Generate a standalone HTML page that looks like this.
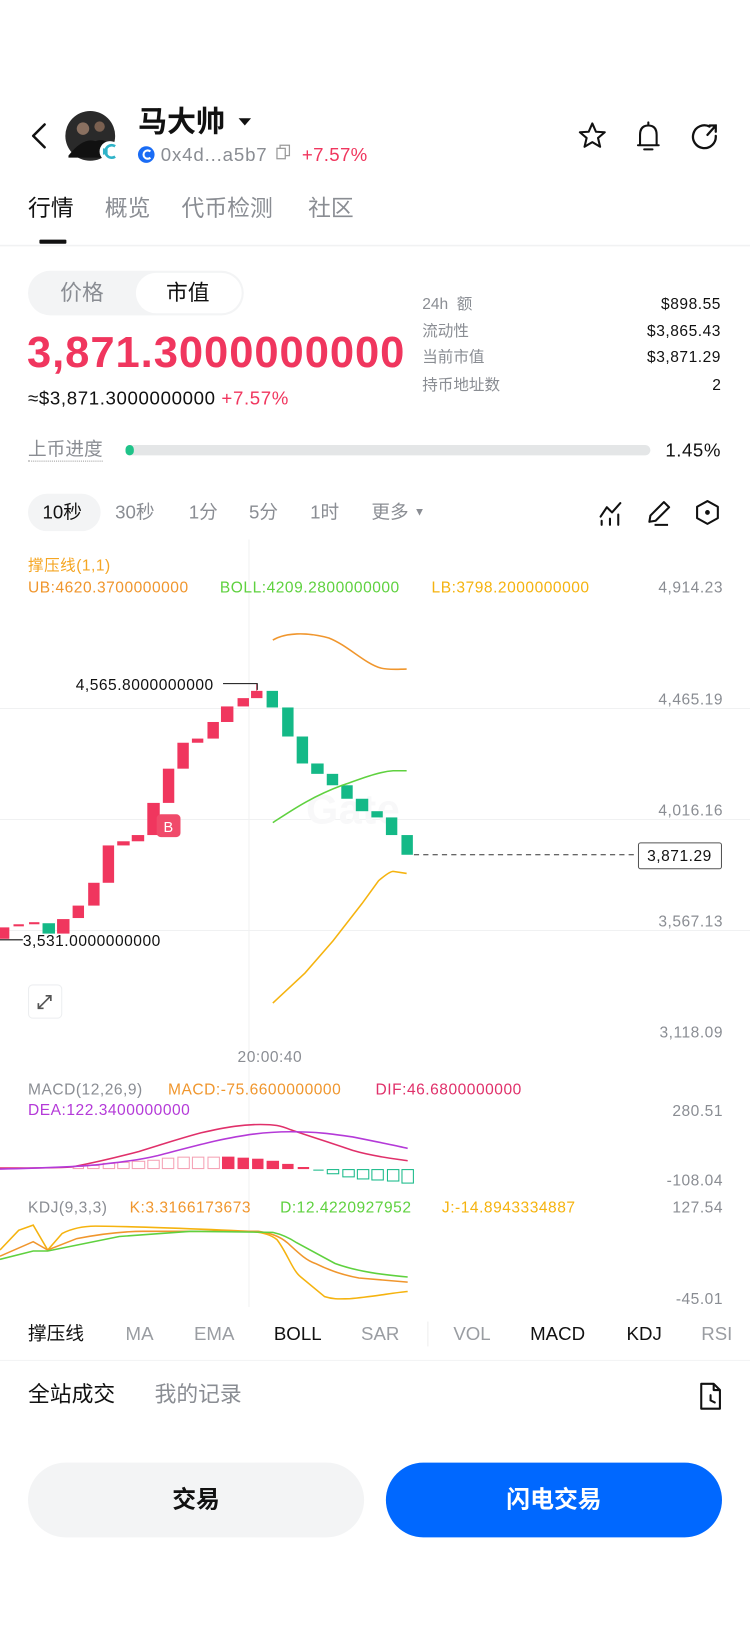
<!DOCTYPE html>
<html><head><meta charset="utf-8">
<style>
*{margin:0;padding:0;box-sizing:border-box}
html,body{width:750px;height:1626px;overflow:hidden;background:#fff}
#w{position:absolute;left:0;top:0;width:723px;height:1568px;transform:scale(1.03734);transform-origin:0 0;font-family:"Liberation Sans","Noto Sans CJK SC",sans-serif;color:#111}
.a{position:absolute;white-space:nowrap;line-height:1}
.g{color:#8a8d93}
.r{color:#f0365e}
svg text{letter-spacing:0.5px}
</style></head><body><div id="w">

<!-- header -->
<svg class="a" style="left:0;top:0" width="723" height="260">
<path d="M43 120 L32 131 L43 142" fill="none" stroke="#111" stroke-width="2.4" stroke-linecap="round" stroke-linejoin="round"/>
<circle cx="87" cy="131" r="24" fill="#2a2a2a"/>
<circle cx="80" cy="124" r="6" fill="#8a7060"/>
<circle cx="96" cy="122" r="5" fill="#7a6050"/>
<path d="M66 150 Q80 132 92 136 Q104 132 110 146 L110 152 L66 152Z" fill="#111"/>
<circle cx="106" cy="146" r="10" fill="#fff"/>
<path d="M111 141 A6 6 0 1 0 111 151" fill="none" stroke="#2fb3c8" stroke-width="2.5"/>
<path d="M103 142 L103 150 M100 143 L100 149" stroke="#2fb3c8" stroke-width="1.5"/>
<path d="M230 114 L242 114 L236 121Z" fill="#111"/>
<circle cx="141" cy="149" r="8" fill="#1a6cf5"/>
<path d="M145 146 A4 4 0 1 0 145 152" fill="none" stroke="#fff" stroke-width="2"/>
<rect x="267" y="143" width="8" height="10" fill="none" stroke="#999" stroke-width="1.2"/>
<path d="M270 143 L270 140 L279 140 L279 150 L275 150" fill="none" stroke="#999" stroke-width="1.2"/>
<path d="M571 119 L574.5 127 L583 127.5 L576.5 133 L578.5 141.5 L571 137 L563.5 141.5 L565.5 133 L559 127.5 L567.5 127Z" fill="none" stroke="#111" stroke-width="2" stroke-linejoin="round"/>
<path d="M615 140 L635 140 M617 140 L617 130 Q617 121 625 121 Q633 121 633 130 L633 140 M625 118 L625 121 M621 144 L629 144" fill="none" stroke="#111" stroke-width="2" stroke-linecap="round"/>
<path d="M684 122 A11 11 0 1 0 690 131" fill="none" stroke="#111" stroke-width="2.2" stroke-linecap="round"/>
<path d="M682 130 L690 121 M684 121 L690 121 L690 127" fill="none" stroke="#111" stroke-width="2.2" stroke-linecap="round"/>
<rect x="38" y="231" width="26" height="4" rx="1" fill="#111"/>
<rect x="0" y="236" width="723" height="1.5" fill="#f1f2f3"/>
</svg>
<div class="a" style="left:133px;top:104px;font-size:28px;font-weight:bold">马大帅</div>
<div class="a g" style="left:155px;top:140px;font-size:18px;letter-spacing:0.8px">0x4d...a5b7</div>
<div class="a r" style="left:291px;top:140px;font-size:18px;letter-spacing:0.3px">+7.57%</div>
<div class="a" style="left:27px;top:190px;font-size:22px">行情</div>
<div class="a g" style="left:101px;top:190px;font-size:22px">概览</div>
<div class="a g" style="left:175px;top:190px;font-size:22px">代币检测</div>
<div class="a g" style="left:297px;top:190px;font-size:22px">社区</div>

<!-- toggle -->
<div class="a" style="left:27px;top:261px;width:208px;height:43px;border-radius:22px;background:#f3f4f5"></div>
<div class="a" style="left:131px;top:263px;width:102px;height:39px;border-radius:20px;background:#fff"></div>
<div class="a g" style="left:58px;top:272px;font-size:21px">价格</div>
<div class="a" style="left:160px;top:272px;font-size:21px">市值</div>

<div class="a r" style="left:26px;top:319px;font-size:42px;font-weight:bold;letter-spacing:0.9px">3,871.3000000000</div>
<div class="a" style="left:27px;top:375px;font-size:18px;letter-spacing:0.6px">≈$3,871.3000000000 <span class="r">+7.57%</span></div>

<div class="a g" style="left:407px;top:286px;font-size:15px">24h&nbsp;&nbsp;额</div>
<div class="a g" style="left:407px;top:312px;font-size:15px">流动性</div>
<div class="a g" style="left:407px;top:337px;font-size:15px">当前市值</div>
<div class="a g" style="left:407px;top:364px;font-size:15px">持币地址数</div>
<div class="a" style="right:28px;top:286px;font-size:15px;letter-spacing:0.5px">$898.55</div>
<div class="a" style="right:28px;top:312px;font-size:15px;letter-spacing:0.5px">$3,865.43</div>
<div class="a" style="right:28px;top:337px;font-size:15px;letter-spacing:0.5px">$3,871.29</div>
<div class="a" style="right:28px;top:364px;font-size:15px">2</div>

<div class="a g" style="left:27px;top:424px;font-size:18px;border-bottom:1.5px dotted #999;padding-bottom:2px">上币进度</div>
<div class="a" style="left:121px;top:429px;width:506px;height:10px;border-radius:5px;background:#e4e6e7"></div>
<div class="a" style="left:121px;top:429px;width:8px;height:10px;border-radius:5px;background:#1fc389"></div>
<div class="a" style="right:28px;top:425px;font-size:18px;letter-spacing:0.5px">1.45%</div>

<!-- timeframes -->
<div class="a" style="left:27px;top:476px;width:70px;height:36px;border-radius:18px;background:#f3f4f5"></div>
<div class="a" style="left:41px;top:485px;font-size:18px">10秒</div>
<div class="a g" style="left:111px;top:485px;font-size:18px">30秒</div>
<div class="a g" style="left:182px;top:485px;font-size:18px">1分</div>
<div class="a g" style="left:240px;top:485px;font-size:18px">5分</div>
<div class="a g" style="left:299px;top:485px;font-size:18px">1时</div>
<div class="a g" style="left:358px;top:485px;font-size:18px">更多 <span style="font-size:11px;vertical-align:3px">▼</span></div>
<svg class="a" style="left:570px;top:478px" width="130" height="32">
<path d="M9 20 L15 11 L20 16 L28 7 M10 24 L10 28 M18 22 L18 28 M26 18 L26 28" fill="none" stroke="#111" stroke-width="2" stroke-linecap="round" stroke-linejoin="round"/>
<path d="M56 25 L57 19 L70 6 L75 11 L62 24Z M61 28 L74 28" fill="none" stroke="#111" stroke-width="2" stroke-linejoin="round"/>
<path d="M112 5 L122 10.5 L122 21.5 L112 27 L102 21.5 L102 10.5Z" fill="none" stroke="#111" stroke-width="2" stroke-linejoin="round"/>
<circle cx="112" cy="16" r="2.3" fill="#111"/>
</svg>

<!-- chart -->
<svg class="a" style="left:0;top:520px" width="723" height="760" font-family="Liberation Sans,Noto Sans CJK SC,sans-serif">
<g transform="translate(0,-520)">
<line x1="240" y1="520" x2="240" y2="1260" stroke="#f0f1f2" stroke-width="1"/>
<line x1="0" y1="683" x2="723" y2="683" stroke="#f0f1f2"/>
<line x1="0" y1="790" x2="723" y2="790" stroke="#f0f1f2"/>
<line x1="0" y1="897" x2="723" y2="897" stroke="#f0f1f2"/>
<text x="295" y="794" font-size="40" font-weight="bold" fill="#f8f8f9">Gate</text>
<text x="27" y="550" font-size="15" fill="#f5a623">撑压线(1,1)</text>
<text x="27" y="571" font-size="15" fill="#f0962d">UB:4620.3700000000</text>
<text x="212" y="571" font-size="15" fill="#5fd13f">BOLL:4209.2800000000</text>
<text x="416" y="571" font-size="15" fill="#f5b30f">LB:3798.2000000000</text>
<g font-size="15" fill="#8a8d93" text-anchor="end">
<text x="697" y="571">4,914.23</text><text x="697" y="679">4,465.19</text><text x="697" y="786">4,016.16</text><text x="697" y="893">3,567.13</text><text x="697" y="1000">3,118.09</text>
<text x="697" y="1076">280.51</text><text x="697" y="1143">-108.04</text><text x="697" y="1169">127.54</text><text x="697" y="1257">-45.01</text>
</g>
<g fill="#f0365e">
<rect x="0" y="894" width="9" height="11"/><rect x="13" y="891" width="10" height="2"/><rect x="28" y="889" width="10" height="2"/>
<rect x="55" y="886" width="12" height="14"/><rect x="70" y="873" width="11" height="12"/><rect x="85" y="851" width="11" height="22"/>
<rect x="99" y="815" width="11" height="36"/><rect x="113" y="811" width="12" height="4"/><rect x="127" y="805" width="12" height="6"/>
<rect x="142" y="774" width="12" height="31"/><rect x="157" y="741" width="11" height="33"/><rect x="171" y="716" width="11" height="25"/>
<rect x="185" y="712" width="11" height="4"/><rect x="200" y="696" width="11" height="16"/><rect x="213" y="681" width="12" height="15"/>
<rect x="229" y="673" width="11" height="8"/><rect x="242" y="666" width="11" height="7"/><rect x="247" y="659" width="1" height="7"/>
</g>
<g fill="#14b987">
<rect x="41" y="890" width="12" height="10"/><rect x="257" y="666" width="11" height="16"/><rect x="272" y="682" width="11" height="28"/>
<rect x="286" y="710" width="11" height="26"/><rect x="300" y="736" width="12" height="10"/><rect x="315" y="746" width="11" height="11"/>
<rect x="329" y="757" width="11" height="13"/><rect x="343" y="770" width="12" height="12"/><rect x="358" y="782" width="11" height="6"/>
<rect x="372" y="788" width="11" height="17"/><rect x="387" y="805" width="11" height="19"/>
</g>
<rect x="151" y="785" width="23" height="22" rx="4" fill="#f04a6a"/>
<text x="162.5" y="802" font-size="14" fill="#fff" text-anchor="middle">B</text>
<path d="M215 659 L248 659 L248 665" fill="none" stroke="#111" stroke-width="1"/>
<text x="73" y="665" font-size="15" fill="#111">4,565.8000000000</text>
<line x1="0" y1="906" x2="22" y2="906" stroke="#111"/>
<text x="22" y="912" font-size="15" fill="#111">3,531.0000000000</text>
<line x1="399" y1="824" x2="613" y2="824" stroke="#333" stroke-dasharray="5,4"/>
<rect x="615.5" y="812.5" width="80" height="25" rx="2" fill="#fff" stroke="#555"/>
<text x="655" y="830" font-size="15" fill="#111" text-anchor="middle">3,871.29</text>
<path d="M263 617 C275 610 295 609 317 615 C335 622 352 640 367 644 C375 646 385 645 392 645" fill="none" stroke="#f0962d" stroke-width="1.5"/>
<path d="M263 793 C280 782 300 768 330 757 C350 750 365 744 379 743 L392 743" fill="none" stroke="#5fd13f" stroke-width="1.5"/>
<path d="M263 967 L294 938 L321 907 L349 871 L365 849 C372 843 377 840 379 840 L392 842" fill="none" stroke="#f5b30f" stroke-width="1.5"/>
<rect x="27.5" y="949.5" width="32" height="32" rx="4" fill="#fff" stroke="#eceef0"/>
<path d="M37 972 L49 960 M44 960 L49 960 L49 965 M37 967 L37 972 L42 972" fill="none" stroke="#555" stroke-width="1.6"/>
<text x="229" y="1024" font-size="15" fill="#8a8d93">20:00:40</text>
<text x="27" y="1055" font-size="15" fill="#8a8d93">MACD(12,26,9)</text>
<text x="162" y="1055" font-size="15" fill="#f0962d">MACD:-75.6600000000</text>
<text x="362" y="1055" font-size="15" fill="#e0306a">DIF:46.6800000000</text>
<text x="27" y="1075" font-size="15" fill="#b43ad8">DEA:122.3400000000</text>
<g fill="none" stroke="#f5a0b4" stroke-width="1">
<rect x="70.5" y="1124.5" width="10" height="2"/><rect x="84.5" y="1123.5" width="11" height="3"/><rect x="99.5" y="1121.5" width="11" height="5"/><rect x="113.5" y="1120.5" width="11" height="6"/><rect x="127.5" y="1119.5" width="12" height="7"/><rect x="142.5" y="1118.5" width="11" height="8"/><rect x="156.5" y="1116.5" width="11" height="10"/><rect x="171.5" y="1115.5" width="11" height="11"/><rect x="185.5" y="1115.5" width="11" height="11"/><rect x="200.5" y="1115.5" width="11" height="11"/>
</g>
<g fill="#f0365e">
<rect x="214" y="1115" width="12" height="12"/><rect x="229" y="1116" width="11" height="11"/><rect x="243" y="1117" width="11" height="10"/><rect x="257" y="1119" width="12" height="8"/><rect x="272" y="1122" width="11" height="5"/><rect x="287" y="1125" width="11" height="2"/>
</g>
<g fill="none" stroke="#14b987" stroke-width="1">
<line x1="302" y1="1128" x2="312" y2="1128"/><rect x="315.5" y="1127.5" width="11" height="4"/><rect x="330.5" y="1127.5" width="11" height="7"/><rect x="344.5" y="1127.5" width="11" height="9"/><rect x="358.5" y="1127.5" width="11" height="10"/><rect x="373.5" y="1127.5" width="11" height="11"/><rect x="387.5" y="1127.5" width="11" height="13"/>
</g>
<path d="M0 1126 C30 1126 55 1126 69 1125 C95 1120 115 1115 134 1110 C160 1102 175 1097 194 1092 C220 1086 235 1084 251 1084 C265 1084 270 1085 280 1089 C300 1096 320 1102 340 1109 C360 1115 380 1117 393 1119" fill="none" stroke="#e0306a" stroke-width="1.5"/>
<path d="M0 1127 C40 1126 70 1125 92 1123 C120 1120 135 1118 152 1114 C175 1108 190 1104 207 1100 C235 1094 255 1091 280 1091 C305 1091 320 1093 340 1096 C360 1100 380 1104 393 1107" fill="none" stroke="#b43ad8" stroke-width="1.5"/>
<text x="27" y="1169" font-size="15" fill="#8a8d93">KDJ(9,3,3)</text>
<text x="125" y="1169" font-size="15" fill="#f0962d">K:3.3166173673</text>
<text x="270" y="1169" font-size="15" fill="#5fd13f">D:12.4220927952</text>
<text x="426" y="1169" font-size="15" fill="#f5b30f">J:-14.8943334887</text>
<path d="M0 1205 L18 1186 L32 1181 L46 1205 L60 1189 C70 1184 80 1182 92 1182 C120 1182 200 1185 240 1187 C255 1188 262 1191 267 1195 C277 1208 282 1225 290 1231 L313 1250 C322 1253 330 1252 337 1252 C360 1250 380 1246 393 1245" fill="none" stroke="#f5b30f" stroke-width="1.5"/>
<path d="M0 1211 L32 1197 L46 1205 L74 1194 C100 1189 120 1187 138 1187 L249 1187 C262 1189 270 1192 277 1198 C288 1208 295 1215 304 1218 C320 1226 335 1230 346 1232 L393 1236" fill="none" stroke="#f0962d" stroke-width="1.5"/>
<path d="M0 1214 L32 1206 L46 1206 L115 1192 L184 1187 L263 1188 C272 1190 280 1194 286 1198 L323 1218 C345 1226 370 1229 393 1231" fill="none" stroke="#5fd13f" stroke-width="1.5"/>
</g>
</svg>

<!-- indicator tabs -->
<div class="a" style="left:27px;top:1277px;font-size:18px">撑压线</div>
<div class="a g" style="left:121px;top:1277px;font-size:18px;color:#9a9da2">MA</div>
<div class="a g" style="left:187px;top:1277px;font-size:18px;color:#9a9da2">EMA</div>
<div class="a" style="left:264px;top:1277px;font-size:18px">BOLL</div>
<div class="a g" style="left:348px;top:1277px;font-size:18px;color:#9a9da2">SAR</div>
<div class="a" style="left:412px;top:1274px;width:1px;height:24px;background:#eee"></div>
<div class="a g" style="left:437px;top:1277px;font-size:18px;color:#9a9da2">VOL</div>
<div class="a" style="left:511px;top:1277px;font-size:18px">MACD</div>
<div class="a" style="left:604px;top:1277px;font-size:18px">KDJ</div>
<div class="a g" style="left:676px;top:1277px;font-size:18px;color:#9a9da2">RSI</div>
<div class="a" style="left:0;top:1311px;width:723px;height:1px;background:#f3f4f5"></div>

<div class="a" style="left:27px;top:1334px;font-size:21px">全站成交</div>
<div class="a g" style="left:149px;top:1334px;font-size:21px">我的记录</div>
<svg class="a" style="left:672px;top:1331px" width="28" height="30">
<path d="M4 3 L16 3 L22 9 L22 27 L4 27Z M16 3 L16 9 L22 9" fill="none" stroke="#111" stroke-width="2" stroke-linejoin="round"/>
<path d="M13 14 L13 19 L17 21" fill="none" stroke="#111" stroke-width="2" stroke-linecap="round"/>
</svg>

<div class="a" style="left:27px;top:1410px;width:324px;height:72px;border-radius:36px;background:#f3f4f5"></div>
<div class="a" style="left:27px;top:1434px;width:324px;text-align:center;font-size:23px;font-weight:bold">交易</div>
<div class="a" style="left:372px;top:1410px;width:324px;height:72px;border-radius:36px;background:#0068ff"></div>
<div class="a" style="left:372px;top:1434px;width:324px;text-align:center;font-size:23px;font-weight:bold;color:#fff">闪电交易</div>

</div></body></html>
